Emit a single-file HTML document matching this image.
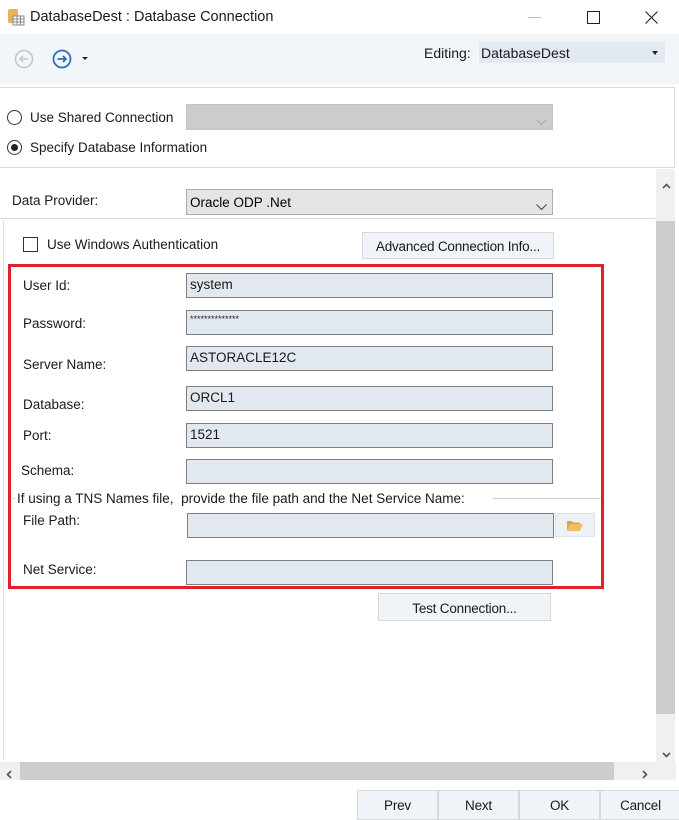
<!DOCTYPE html>
<html><head><style>
body{margin:0;width:679px;height:818px;position:relative;overflow:hidden;background:#fff;font-family:"Liberation Sans",sans-serif;font-size:13.5px;color:#1a1a1a}
.a{position:absolute;white-space:nowrap}
.f{position:absolute;background:#e2e8ef;border:1px solid #7f7f7f;box-sizing:border-box;height:25px;font-size:13.5px;padding:3px 0 0 3px}
.btn{position:absolute;background:#f0f4f8;border:1px solid #d4d9de;box-sizing:border-box;text-align:center;font-size:13.5px;letter-spacing:-0.2px}
</style></head><body>
<div class="a" style="left:7px;top:8px;width:16px;height:18px">
<svg width="18" height="18"><rect x="1" y="1" width="10" height="14" rx="2" fill="#e8b25a"/><rect x="6" y="8" width="11" height="9" fill="#fff" stroke="#888"/><path d="M6 11h11M6 14h11M10 8v9M13.5 8v9" stroke="#888"/></svg></div>
<div class="a" style="left:30px;top:9px;font-size:14.5px">DatabaseDest : Database Connection</div>
<div class="a" style="left:528px;top:17px;width:13px;height:1px;background:#bbb"></div>
<div class="a" style="left:587px;top:11px;width:11px;height:11px;border:1px solid #222"></div>
<div class="a" style="left:645px;top:11px"><svg width="13" height="13"><path d="M0.5 0.5l12 12M12.5 0.5l-12 12" stroke="#222" stroke-width="1.1"/></svg></div>
<div class="a" style="left:0;top:34px;width:679px;height:50px;background:#f2f5f9"></div>
<div class="a" style="left:14px;top:49px"><svg width="20" height="20"><circle cx="10" cy="10" r="8.5" fill="none" stroke="#c6c6c6" stroke-width="1.6"/><path d="M14 10H6M9 7l-3 3 3 3" stroke="#c6c6c6" stroke-width="1.6" fill="none"/></svg></div>
<div class="a" style="left:52px;top:49px"><svg width="20" height="20"><circle cx="10" cy="10" r="8.5" fill="none" stroke="#2f6db5" stroke-width="1.8"/><path d="M5.5 10H14M11 7l3 3-3 3" stroke="#2f6db5" stroke-width="1.8" fill="none"/></svg></div>
<div class="a" style="left:82px;top:57px;border-left:3px solid transparent;border-right:3px solid transparent;border-top:3px solid #222"></div>
<div class="a" style="left:424px;top:45px;font-size:14px">Editing:</div>
<div class="a" style="left:479px;top:42px;width:186px;height:21px;background:#e3e9f0"></div>
<div class="a" style="left:481px;top:45px;font-size:14px">DatabaseDest</div>
<div class="a" style="left:652px;top:51px;border-left:3px solid transparent;border-right:3px solid transparent;border-top:4px solid #222"></div>
<div class="a" style="left:0;top:87px;width:675px;height:81px;border:1px solid #dcdcdc;box-sizing:border-box;border-left:none"></div>
<div class="a" style="left:7px;top:110px;width:13px;height:13px;border:1px solid #333;border-radius:50%"></div>
<div class="a" style="left:30px;top:110px">Use Shared Connection</div>
<div class="a" style="left:186px;top:104px;width:367px;height:26px;background:#cccccc;border:1px solid #c4c4c4;box-sizing:border-box"></div>
<div class="a" style="left:536px;top:114px"><svg width="11" height="7"><path d="M0.5 0.5l5 5 5-5" stroke="#aaa" fill="none"/></svg></div>
<div class="a" style="left:7px;top:140px;width:13px;height:13px;border:1px solid #333;border-radius:50%"></div>
<div class="a" style="left:11px;top:144px;width:7px;height:7px;background:#222;border-radius:50%"></div>
<div class="a" style="left:30px;top:140px">Specify Database Information</div>
<div class="a" style="left:3px;top:220px;width:1px;height:540px;background:#ddd"></div>
<div class="a" style="left:656px;top:169px;width:19px;height:593px;background:#f0f0f0"></div>
<div class="a" style="left:656px;top:221px;width:19px;height:493px;background:#cdcdcd"></div>
<div class="a" style="left:662px;top:177px"><svg width="9" height="6"><path d="M1 5l3.5-3.5L8 5" stroke="#555" stroke-width="1.6" fill="none"/></svg></div>
<div class="a" style="left:662px;top:746px"><svg width="9" height="6"><path d="M1 1l3.5 3.5L8 1" stroke="#555" stroke-width="1.6" fill="none"/></svg></div>
<div class="a" style="left:0;top:762px;width:676px;height:18px;background:#f0f0f0"></div>
<div class="a" style="left:20px;top:762px;width:594px;height:18px;background:#cdcdcd"></div>
<div class="a" style="left:6px;top:767px"><svg width="6" height="9"><path d="M5 1L1.5 4.5 5 8" stroke="#555" stroke-width="1.6" fill="none"/></svg></div>
<div class="a" style="left:642px;top:767px"><svg width="6" height="9"><path d="M1 1l3.5 3.5L1 8" stroke="#555" stroke-width="1.6" fill="none"/></svg></div>
<div class="a" style="left:12px;top:193px">Data Provider:</div>
<div class="a" style="left:186px;top:189px;width:367px;height:26px;background:#e5e5e5;border:1px solid #adadad;box-sizing:border-box"></div>
<div class="a" style="left:190px;top:195px;color:#000">Oracle ODP .Net</div>
<div class="a" style="left:536px;top:199px"><svg width="11" height="7"><path d="M0.5 0.5l5 5 5-5" stroke="#444" fill="none"/></svg></div>
<div class="a" style="left:0;top:218px;width:655px;height:1px;background:#dcdcdc"></div>
<div class="a" style="left:23px;top:237px;width:13px;height:13px;border:1px solid #333"></div>
<div class="a" style="left:47px;top:237px">Use Windows Authentication</div>
<div class="btn" style="left:362px;top:232px;width:192px;height:27px;padding-top:6px">Advanced Connection Info...</div>
<div class="a" style="left:8px;top:264px;width:596px;height:325px;border:3px solid #e0202a;box-sizing:border-box"></div>
<div class="a" style="left:23px;top:278px">User Id:</div>
<div class="f" style="left:186px;top:273px;width:367px">system</div>
<div class="a" style="left:23px;top:316px">Password:</div>
<div class="f" style="left:186px;top:310px;width:367px;font-size:9px;padding-top:3px">**************</div>
<div class="a" style="left:23px;top:357px">Server Name:</div>
<div class="f" style="left:186px;top:346px;width:367px">ASTORACLE12C</div>
<div class="a" style="left:23px;top:397px">Database:</div>
<div class="f" style="left:186px;top:386px;width:367px">ORCL1</div>
<div class="a" style="left:23px;top:428px">Port:</div>
<div class="f" style="left:186px;top:423px;width:367px">1521</div>
<div class="a" style="left:21px;top:463px">Schema:</div>
<div class="f" style="left:186px;top:459px;width:367px"></div>
<div class="a" style="left:13px;top:498px;width:2px;height:1px;background:#ccc"></div>
<div class="a" style="left:17px;top:491px">If using a TNS Names file,&nbsp; provide the file path and the Net Service Name:</div>
<div class="a" style="left:493px;top:498px;width:108px;height:1px;background:#ccc"></div>
<div class="a" style="left:23px;top:513px">File Path:</div>
<div class="f" style="left:187px;top:513px;width:367px"></div>
<div class="a" style="left:555px;top:513px;width:40px;height:24px;background:#eef2f6;border:1px solid #dde2e7;box-sizing:border-box"></div>
<div class="a" style="left:566px;top:519px"><svg width="18" height="13"><path d="M1 2h5l1 1.5h7v2H4L1 12z" fill="#d9a84a"/><path d="M4 5h13l-3 7H1z" fill="#edc063"/></svg></div>
<div class="a" style="left:23px;top:562px">Net Service:</div>
<div class="f" style="left:186px;top:560px;width:367px"></div>
<div class="btn" style="left:378px;top:593px;width:173px;height:28px;padding-top:7px">Test Connection...</div>
<div class="btn" style="left:357px;top:790px;width:81px;height:30px;padding-top:7px">Prev</div>
<div class="btn" style="left:438px;top:790px;width:81px;height:30px;padding-top:7px">Next</div>
<div class="btn" style="left:519px;top:790px;width:81px;height:30px;padding-top:7px">OK</div>
<div class="btn" style="left:600px;top:790px;width:81px;height:30px;padding-top:7px">Cancel</div>
</body></html>
